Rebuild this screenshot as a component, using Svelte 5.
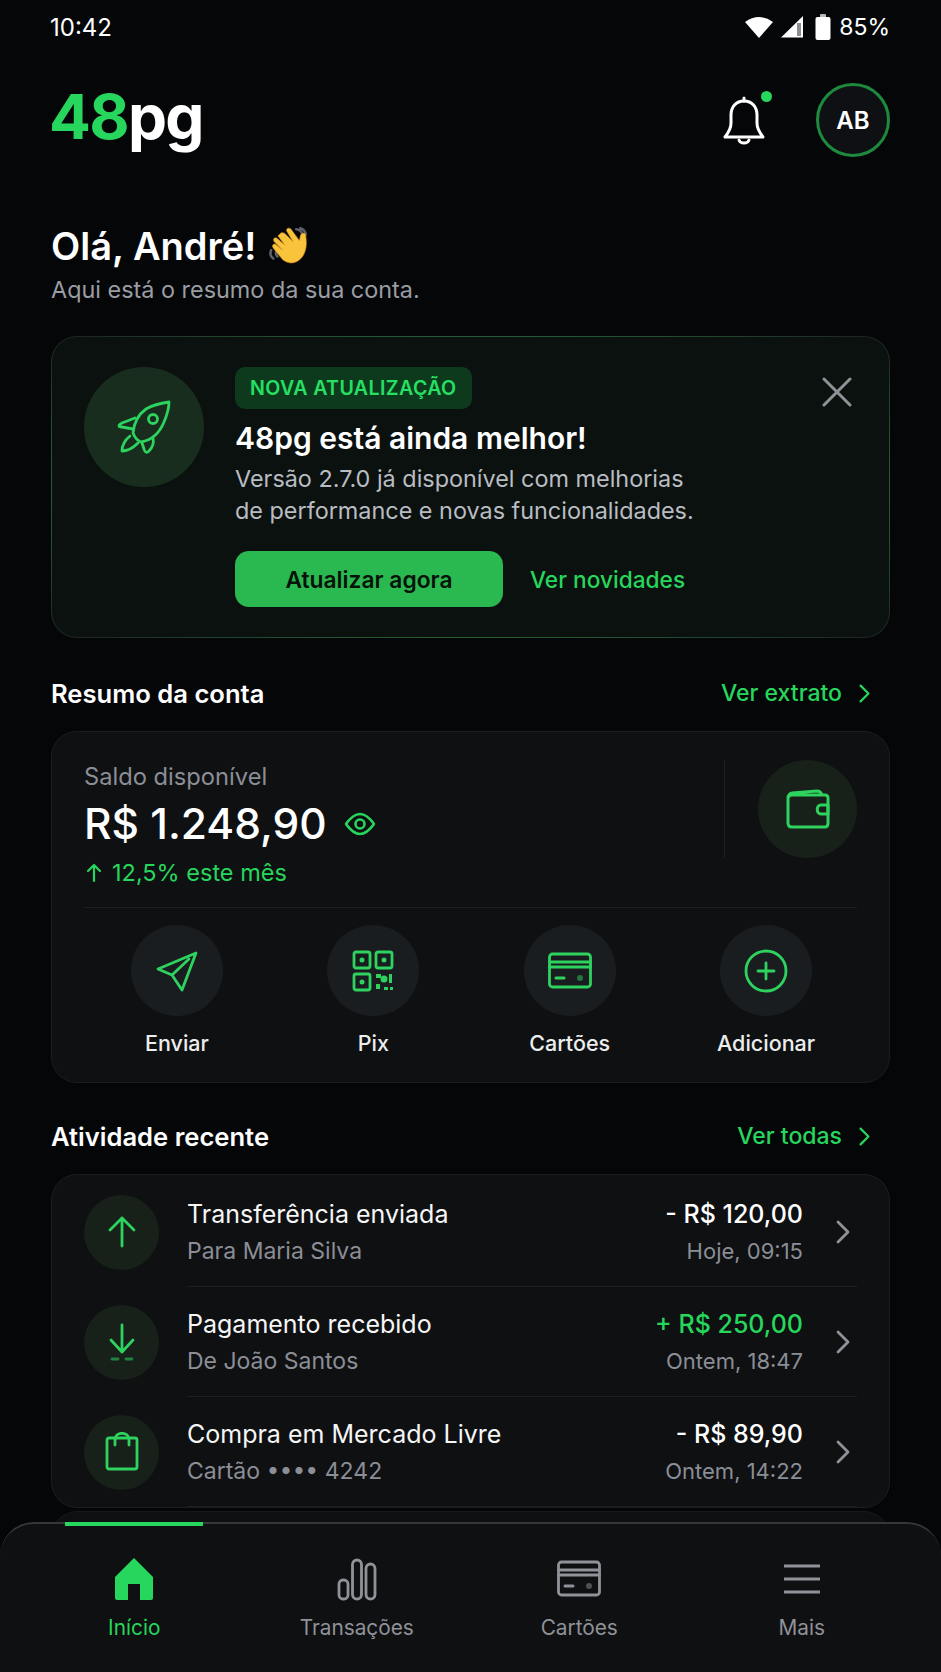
<script lang="ts">
  const rows = [
    { icon: 'up', title: 'Transferência enviada', sub: 'Para Maria Silva', amount: '- R$ 120,00', when: 'Hoje, 09:15', plus: false },
    { icon: 'down', title: 'Pagamento recebido', sub: 'De João Santos', amount: '+ R$ 250,00', when: 'Ontem, 18:47', plus: true },
    { icon: 'bag', title: 'Compra em Mercado Livre', sub: 'Cartão •••• 4242', amount: '- R$ 89,90', when: 'Ontem, 14:22', plus: false },
  ];
  const actions = [
    { icon: 'send', label: 'Enviar' },
    { icon: 'pix', label: 'Pix' },
    { icon: 'card', label: 'Cartões' },
    { icon: 'add', label: 'Adicionar' },
  ];
  const tabs = [
    { icon: 'home', label: 'Início', active: true },
    { icon: 'bars', label: 'Transações', active: false },
    { icon: 'card', label: 'Cartões', active: false },
    { icon: 'menu', label: 'Mais', active: false },
  ];
</script>

{#snippet chevron(cls)}
  <svg class={cls} viewBox="0 0 14 24" fill="none" stroke="currentColor" stroke-width="2.800" stroke-linecap="round" stroke-linejoin="round">
    <path d="M2 2l10 10L2 22" />
  </svg>
{/snippet}

{#snippet cardIcon()}
  <rect x="1.500" y="5" width="41" height="33" rx="3" />
  <path d="M1.500 13h41M1.500 18h41" />
  <path d="M8 29h8" stroke-width="3" />
  <circle cx="32" cy="29" r="3" fill="currentColor" opacity="0.5" stroke="none" />
{/snippet}

<div class="page">
  <div class="status">
    <span class="time">10:42</span>
    <div class="status-right">
      <svg width="28" height="24" viewBox="0 0 28 24" fill="#fff"><path d="M0 7Q14-3 28 7L14 23z" /></svg>
      <svg class="signal" width="24" height="24" viewBox="0 0 24 24"><path d="M1 22.500L23 1v21.500z" fill="#fff" /><rect x="17" y="8" width="4" height="13" fill="#8b8d90" /></svg>
      <svg width="16" height="26" viewBox="0 0 16 26" fill="#fff"><rect x="5" y="0" width="6" height="4" rx="1" fill="#b9babc" /><rect x="0.500" y="3" width="15" height="23" rx="2" /></svg>
      <span class="pct">85%</span>
    </div>
  </div>

  <header class="top">
    <div class="logo"><span class="g">48</span>pg</div>
    <div class="top-right">
      <div class="bell">
        <svg width="46" height="52" viewBox="0 0 46 52" fill="none" stroke="#fff" stroke-width="3" stroke-linejoin="round" stroke-linecap="round">
          <path d="M23 5c-8 0-13 6-13 14v8c0 5-2 9-6 14h38c-4-5-6-9-6-14v-8c0-8-5-14-13-14z" />
          <path d="M23 2v3M18 44c1 4 9 4 10 0" />
        </svg>
        <span class="dot"></span>
      </div>
      <div class="avatar">AB</div>
    </div>
  </header>

  <div class="hello">
    <h1>Olá, André!
      <svg class="wave" width="44" height="40" viewBox="0 0 42 38">
        <path d="M3 23q-2 5 2 8M8 24q-1 3 1 5M27 3q4 0 6 5M31 2q4 1 5 6" fill="none" stroke="#5d6068" stroke-width="2.500" stroke-linecap="round" />
        <path d="M11 8c1-2 3-2 5-1l8 8-6-10c-1-3 2-4 4-2l8 11 1-5c1-3 5-3 5 0 1 7 1 14-3 20-5 7-13 8-19 3L5 21c-2-3 1-5 3-3l6 5-8-8c-2-3 1-5 3-3l7 6-6-8c-1-1 0-1 1-2z" fill="#f9c33c" stroke="#e09a1c" stroke-width="0.600" />
      </svg>
    </h1>
    <p>Aqui está o resumo da sua conta.</p>
  </div>

  <section class="banner">
    <div class="rocket">
      <svg width="120" height="120" viewBox="0 0 120 120" fill="none" stroke="#2ed25f" stroke-width="2.800" stroke-linejoin="round" stroke-linecap="round">
        <path d="M85 35C78 36 69 38 62 42 55 47 50 55 49 66 51 71 54 74 57 75 68 73 76 65 80 55 83 48 85 41 85 35z" />
        <path d="M51 51L38 56C34 58 34 60 38 60L49 62" />
        <path d="M58 76L60 82C61 86 63 86 65 84 68 81 70 76 69 71" />
        <path d="M46 69C41 73 38 79 38 84 43 84 49 81 54 76" />
        <circle cx="69" cy="52" r="4.500" />
      </svg>
    </div>
    <div class="banner-body">
      <span class="badge">NOVA ATUALIZAÇÃO</span>
      <h2>48pg está ainda melhor!</h2>
      <p>Versão 2.7.0 já disponível com melhorias<br />de performance e novas funcionalidades.</p>
      <div class="banner-actions">
        <button class="primary">Atualizar agora</button>
        <span class="link">Ver novidades</span>
      </div>
    </div>
    <svg class="close" width="30" height="30" viewBox="0 0 30 30" fill="none" stroke="#8f9399" stroke-width="3" stroke-linecap="round">
      <path d="M2 2l26 26M28 2L2 28" />
    </svg>
  </section>

  <div class="section-head">
    <h3>Resumo da conta</h3>
    <span class="more">Ver extrato {@render chevron('chev-green')}</span>
  </div>

  <section class="card balance">
    <div class="balance-top">
      <div class="balance-info">
        <div class="muted">Saldo disponível</div>
        <div class="value">R$ 1.248,90
          <svg width="32" height="24" viewBox="0 0 32 24" fill="none" stroke="#27d65c" stroke-width="2.600" stroke-linejoin="round">
            <path d="M2 12C7 5 11 2 16 2s9 3 14 10c-5 7-9 10-14 10S7 19 2 12z" />
            <circle cx="16" cy="12" r="4.500" />
          </svg>
        </div>
        <div class="trend">
          <svg width="16" height="20" viewBox="0 0 16 20" fill="none" stroke="#27d65c" stroke-width="2.200" stroke-linecap="round" stroke-linejoin="round">
            <path d="M8 18V2M2 8l6-6 6 6" />
          </svg>
          12,5% este mês
        </div>
      </div>
      <div class="wallet-wrap">
        <div class="wallet">
          <svg width="44" height="40" viewBox="0 0 44 40" fill="none" stroke="#2ed25f" stroke-width="3" stroke-linejoin="round" stroke-linecap="round">
            <path d="M2 10v24c0 2 1 4 4 4h33c2 0 3-2 3-4V9c0-2-1-3-3-3H6C3 6 2 8 2 10zM2 9c0-3 2-5 4-5l25-2c3 0 4 1 5 4" />
            <path d="M42 16h-7c-5 0-5 9 0 9h7z" />
          </svg>
        </div>
      </div>
    </div>
    <div class="actions">
      {#each actions as a}
        <div class="action">
          <div class="action-icon">
            <svg width="44" height="44" viewBox="0 0 44 44" fill="none" stroke="#2ed25f" stroke-width="2.800" stroke-linejoin="round" stroke-linecap="round" style="color:#2ed25f">
              {#if a.icon === 'send'}
                <path d="M41 4L3 20l14 6 10 15zM17 26L34 10" />
              {:else if a.icon === 'pix'}
                <rect x="3" y="3" width="16" height="16" rx="2" />
                <rect x="25" y="3" width="16" height="16" rx="2" />
                <rect x="3" y="25" width="16" height="16" rx="2" />
                <g fill="#2ed25f" stroke="none">
                  <circle cx="11" cy="11" r="2.500" />
                  <circle cx="33" cy="11" r="2.500" />
                  <circle cx="11" cy="33" r="2.500" />
                  <rect x="25" y="25" width="5" height="4" />
                  <circle cx="33" cy="30" r="3.500" />
                  <rect x="38" y="25" width="3" height="9" />
                  <rect x="25" y="35" width="4" height="5" />
                  <rect x="33" y="38" width="4" height="3" />
                  <rect x="39" y="38" width="3" height="3" />
                </g>
              {:else if a.icon === 'card'}
                {@render cardIcon()}
              {:else}
                <circle cx="22" cy="22" r="20" />
                <path d="M22 14v16M14 22h16" />
              {/if}
            </svg>
          </div>
          <span>{a.label}</span>
        </div>
      {/each}
    </div>
  </section>

  <div class="section-head second">
    <h3>Atividade recente</h3>
    <span class="more">Ver todas {@render chevron('chev-green')}</span>
  </div>

  <section class="card list">
    {#each rows as r}
      <div class="row">
        <div class="row-icon">
          <svg width="36" height="40" viewBox="0 0 36 40" fill="none" stroke="#2ed25f" stroke-width="2.800" stroke-linecap="round" stroke-linejoin="round">
            {#if r.icon === 'up'}
              <path d="M18 34V6M6 18L18 6l12 12" />
            {:else if r.icon === 'down'}
              <path d="M18 3v27M7 18l11 12 11-12" />
              <path d="M8 37h6M22 37h6" opacity="0.55" />
            {:else}
              <rect x="3" y="6" width="30" height="31" rx="2" />
              <path d="M11 13V8c0-9 14-9 14 0v5" />
            {/if}
          </svg>
        </div>
        <div class="row-body">
          <div class="row-text">
            <div class="row-title">{r.title}</div>
            <div class="row-sub">{r.sub}</div>
          </div>
          <div class="row-amount">
            <div class="amount" class:plus={r.plus}>{r.amount}</div>
            <div class="row-sub when">{r.when}</div>
          </div>
          {@render chevron('chev-grey')}
        </div>
      </div>
    {/each}
  </section>
  <div class="peek"></div>

  <nav class="tabbar">
    {#each tabs as t}
      <div class="tab" class:active={t.active}>
        <svg width="44" height="44" viewBox="0 0 44 44" fill="none" stroke="currentColor" stroke-width="2.800" stroke-linejoin="round" stroke-linecap="round">
          {#if t.icon === 'home'}
            <path d="M22 1L41 20v21a2 2 0 0 1-2 2H28V27h-12v16H5a2 2 0 0 1-2-2V20z" fill="currentColor" stroke="none" />
          {:else if t.icon === 'bars'}
            <rect x="4" y="23" width="9" height="19" rx="4" />
            <rect x="17.500" y="3" width="9" height="39" rx="4.500" />
            <rect x="31" y="7" width="9" height="35" rx="4.500" />
          {:else if t.icon === 'card'}
            {@render cardIcon()}
          {:else}
            <path d="M4 9h36M4 22h36M4 35h36" stroke-linecap="butt" />
          {/if}
        </svg>
        <span>{t.label}</span>
      </div>
    {/each}
  </nav>
</div>

<style>
  :global(body) {
    background: #050608;
  }
  .page {
    position: relative;
    height: 1672px;
    overflow: hidden;
    padding: 0 51px;
    box-sizing: border-box;
    background: #050608;
    color: #fff;
    font-family: Inter, "Liberation Sans", sans-serif;
  }
  h1, h2, h3, p {
    margin: 0;
  }
  .status {
    display: flex;
    justify-content: space-between;
    align-items: center;
    height: 54px;
    font-size: 23px;
    font-weight: 400;
  }
  .time {
    font-size: 24px;
    margin-left: -1px;
  }
  .status-right {
    display: flex;
    align-items: center;
    gap: 7px;
  }
  .signal {
    margin-right: 4px;
  }
  .pct {
    margin-left: 1px;
  }
  .top {
    display: flex;
    justify-content: space-between;
    align-items: center;
    height: 74px;
    margin-top: 29px;
  }
  .logo {
    font-size: 62px;
    font-weight: 700;
    letter-spacing: -1.700px;
    line-height: 1;
    margin: -6px 0 0 -2px;
  }
  .g {
    color: #27d65c;
  }
  .top-right {
    display: flex;
    align-items: center;
    gap: 49px;
  }
  .bell {
    position: relative;
    width: 46px;
    height: 52px;
    margin-top: 4px;
  }
  .dot {
    position: absolute;
    top: -5px;
    right: -5px;
    width: 11px;
    height: 11px;
    border-radius: 50%;
    background: #27d65c;
  }
  .avatar {
    width: 74px;
    height: 74px;
    box-sizing: border-box;
    border: 3px solid #1d8a3e;
    border-radius: 50%;
    background: #0e1013;
    display: flex;
    align-items: center;
    justify-content: center;
    font-size: 24px;
    font-weight: 600;
  }
  .hello {
    margin-top: 67px;
  }
  .hello h1 {
    font-size: 38px;
    font-weight: 600;
    line-height: 44px;
    display: flex;
    align-items: center;
    gap: 12px;
  }
  .hello p {
    margin-top: 8px;
    font-size: 23.400px;
    line-height: 28px;
    color: #9a9da3;
  }
  .banner {
    position: relative;
    margin-top: 32px;
    height: 302px;
    box-sizing: border-box;
    padding: 30px 32px 0;
    display: flex;
    gap: 31px;
    border: 1px solid transparent;
    border-radius: 26px;
    background:
      linear-gradient(#0b110e, #0b110e) padding-box,
      radial-gradient(ellipse at center, #2a7a3f 55%, #1c1f22 100%) border-box;
  }
  .rocket {
    width: 120px;
    height: 120px;
    flex: none;
    border-radius: 50%;
    background: #182d1e;
  }
  .banner-body {
    display: flex;
    flex-direction: column;
    align-items: flex-start;
  }
  .badge {
    height: 42px;
    box-sizing: border-box;
    padding: 0 15px;
    display: flex;
    align-items: center;
    border-radius: 10px;
    background: #0d3a1d;
    color: #27e063;
    font-size: 19.600px;
    font-weight: 600;
    letter-spacing: 0.400px;
  }
  .banner h2 {
    margin-top: 9px;
    font-size: 30px;
    font-weight: 600;
    line-height: 40px;
  }
  .banner p {
    margin-top: 5px;
    font-size: 23.400px;
    line-height: 32px;
    color: #b9bcc2;
  }
  .banner-actions {
    display: flex;
    align-items: center;
    gap: 27px;
    margin-top: 24px;
  }
  .primary {
    width: 268px;
    height: 56px;
    border: 0;
    border-radius: 14px;
    background: #2ab851;
    color: #07120a;
    font-family: inherit;
    font-size: 22.800px;
    font-weight: 600;
  }
  .link {
    color: #27d65c;
    font-size: 22.700px;
    font-weight: 500;
  }
  .close {
    position: absolute;
    top: 40px;
    right: 37px;
  }
  .section-head {
    display: flex;
    justify-content: space-between;
    align-items: center;
    height: 32px;
    margin-top: 39px;
  }
  .section-head.second {
    margin-top: 37px;
  }
  .section-head h3 {
    font-size: 25.600px;
    font-weight: 600;
  }
  .more {
    display: flex;
    align-items: center;
    gap: 17px;
    color: #27d65c;
    font-size: 23px;
    font-weight: 500;
    margin-right: 20px;
  }
  .more :global(.chev-green) {
    width: 11px;
    height: 19px;
  }
  .card {
    box-sizing: border-box;
    margin-top: 22px;
    border: 1px solid #1b1d21;
    border-radius: 26px;
    background: #0f1012;
  }
  .balance {
    height: 352px;
    padding: 28px 32px 0;
  }
  .balance-top {
    display: flex;
    justify-content: space-between;
    height: 147px;
    border-bottom: 1px solid #1d1f23;
  }
  .muted {
    font-size: 23.700px;
    line-height: 34px;
    color: #8b8e96;
  }
  .value {
    display: flex;
    align-items: center;
    gap: 17px;
    margin-top: 2px;
    font-size: 42.500px;
    font-weight: 500;
    line-height: 56px;
  }
  .trend {
    display: flex;
    align-items: center;
    gap: 10px;
    margin: 6px 0 0 2px;
    font-size: 23.500px;
    line-height: 30px;
    color: #27d65c;
  }
  .wallet-wrap {
    height: 98px;
    padding-left: 33px;
    border-left: 1px solid #1d1f23;
  }
  .wallet {
    width: 99px;
    height: 98px;
    border-radius: 50%;
    background: #172019;
    display: flex;
    align-items: center;
    justify-content: center;
  }
  .actions {
    display: grid;
    grid-template-columns: repeat(4, 196.400px);
    justify-content: center;
    padding: 17px 0 0 2px;
  }
  .action {
    display: flex;
    flex-direction: column;
    align-items: center;
    gap: 14px;
    font-size: 21.500px;
    font-weight: 500;
    color: #eceded;
  }
  .action-icon {
    width: 92px;
    height: 91px;
    border-radius: 50%;
    background: #1a1d20;
    display: flex;
    align-items: center;
    justify-content: center;
  }
  .list {
    height: 334px;
    padding: 0 32px;
  }
  .row {
    display: flex;
    align-items: center;
    gap: 28px;
    height: 110px;
  }
  .row:first-child {
    margin-top: 2px;
  }
  .row-icon {
    width: 75px;
    height: 75px;
    flex: none;
    border-radius: 50%;
    background: #172019;
    display: flex;
    align-items: center;
    justify-content: center;
  }
  .row-body {
    flex: 1;
    height: 100%;
    display: flex;
    align-items: center;
    border-bottom: 1px solid #1d1f23;
    box-sizing: border-box;
  }
  .row-text {
    flex: 1;
  }
  .row-title {
    font-size: 25px;
    font-weight: 400;
    line-height: 38px;
    color: #f6f6f6;
  }
  .row-sub {
    font-size: 23px;
    line-height: 36px;
    color: #8b8e96;
  }
  .row-sub.when {
    font-size: 22px;
  }
  .row-amount {
    text-align: right;
    margin-right: 33px;
  }
  .amount {
    font-size: 25px;
    font-weight: 500;
    line-height: 38px;
  }
  .amount.plus {
    color: #27d65c;
  }
  .row-body :global(.chev-grey) {
    width: 14px;
    height: 24px;
    color: #8f9399;
    margin-right: 7px;
  }
  .peek {
    height: 40px;
    margin-top: 3px;
    border: 1px solid #16181b;
    border-radius: 26px 26px 0 0;
    background: #0e0f11;
  }
  .tabbar {
    position: absolute;
    left: 0;
    right: 0;
    bottom: 0;
    height: 150px;
    box-sizing: border-box;
    padding: 0 28px 0 23px;
    display: grid;
    grid-template-columns: repeat(4, 1fr);
    border-top: 2px solid #35373b;
    border-radius: 34px 34px 0 0;
    background: #0f1012;
  }
  .tab {
    position: relative;
    display: flex;
    flex-direction: column;
    align-items: center;
    padding-top: 33px;
    gap: 14px;
    font-size: 20.800px;
    color: #8f9298;
  }
  .tab.active {
    color: #27d65c;
  }
  .tab.active::before {
    content: "";
    position: absolute;
    top: -2px;
    left: 42px;
    width: 138px;
    height: 4px;
    background: #27d65c;
  }
</style>
